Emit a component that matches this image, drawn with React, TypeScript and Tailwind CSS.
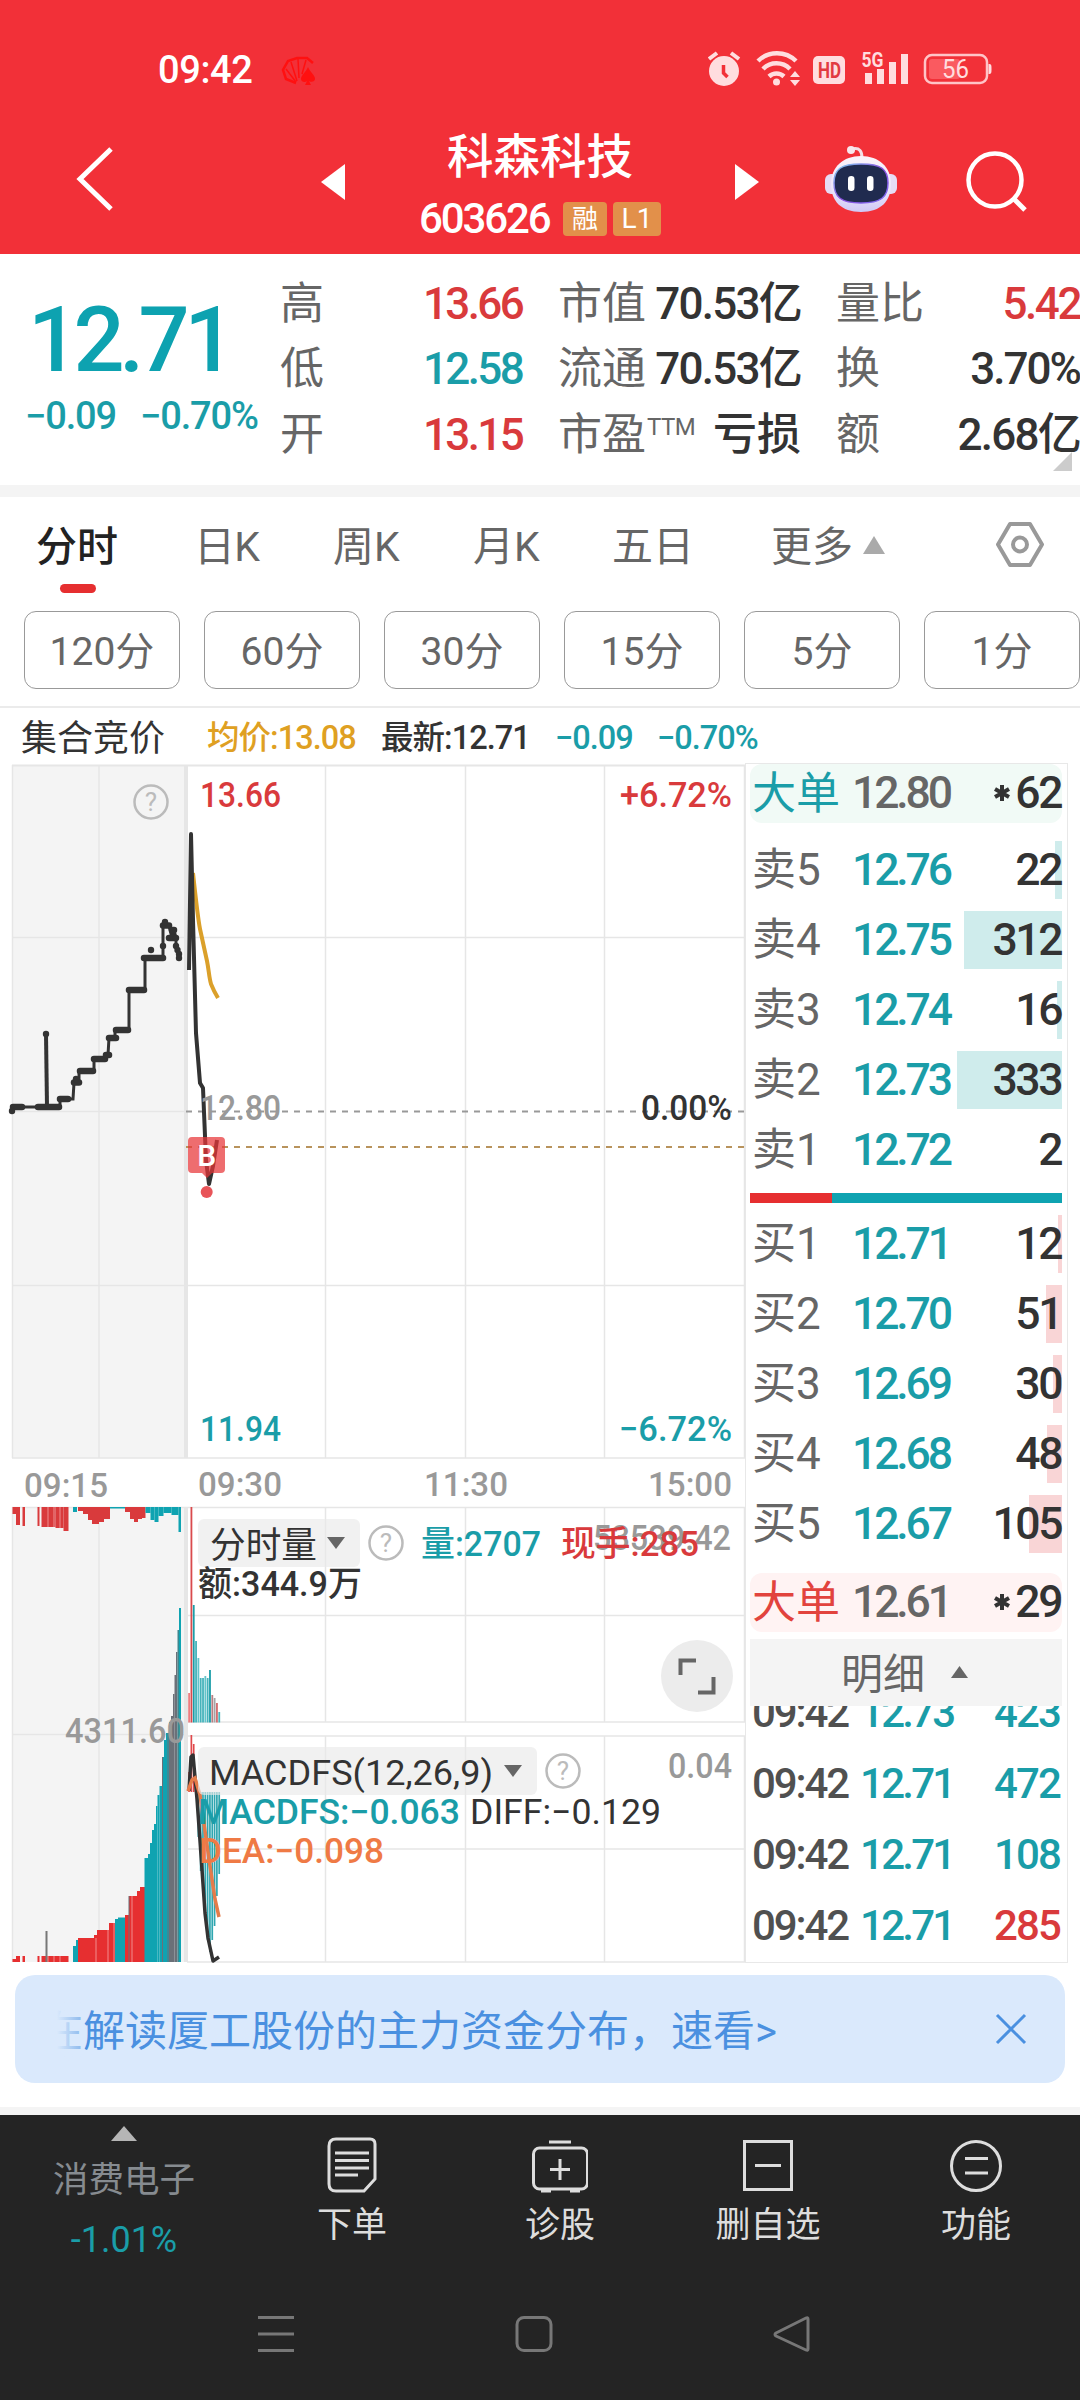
import React from 'react';
import clsx from 'clsx';

const TEAL = '#1a9da8';
const RED = '#d93a3c';
const GREY = '#999999';
const INK = '#333333';

interface Quote {
  label: string;
  sup?: string;
  value: string;
  tone: string;
}

const quoteColumns: { box: string; rows: Quote[] }[] = [
  {
    box: 'w-[242px] -ml-[1px]',
    rows: [
      { label: '高', value: '13.66', tone: 'text-[#d93a3c] tracking-[-0.06em]' },
      { label: '低', value: '12.58', tone: 'text-[#1a9da8] tracking-[-0.06em]' },
      { label: '开', value: '13.15', tone: 'text-[#d93a3c] tracking-[-0.06em]' },
    ],
  },
  {
    box: 'ml-[36px] w-[243px]',
    rows: [
      { label: '市值', value: '70.53亿', tone: 'text-[#333] tracking-[-0.04em]' },
      { label: '流通', value: '70.53亿', tone: 'text-[#333] tracking-[-0.04em]' },
      { label: '市盈', sup: 'TTM', value: '亏损', tone: 'text-[#333]' },
    ],
  },
  {
    box: 'ml-[35px] w-[244px]',
    rows: [
      { label: '量比', value: '5.42', tone: 'text-[#d93a3c] tracking-[-0.055em]' },
      { label: '换', value: '3.70%', tone: 'text-[#333] tracking-[-0.045em]' },
      { label: '额', value: '2.68亿', tone: 'text-[#333] tracking-[-0.04em]' },
    ],
  },
];

const periods = ['120分', '60分', '30分', '15分', '5分', '1分'];

const asks = [
  { label: '卖5', price: '12.76', volume: 22 },
  { label: '卖4', price: '12.75', volume: 312 },
  { label: '卖3', price: '12.74', volume: 16 },
  { label: '卖2', price: '12.73', volume: 333 },
  { label: '卖1', price: '12.72', volume: 2 },
];

const bids = [
  { label: '买1', price: '12.71', volume: 12 },
  { label: '买2', price: '12.70', volume: 51 },
  { label: '买3', price: '12.69', volume: 30 },
  { label: '买4', price: '12.68', volume: 48 },
  { label: '买5', price: '12.67', volume: 105 },
];

const ticks = [
  { time: '09:42', price: '12.73', volume: '423', tone: 'text-[#1a9da8]' },
  { time: '09:42', price: '12.71', volume: '472', tone: 'text-[#1a9da8]' },
  { time: '09:42', price: '12.71', volume: '108', tone: 'text-[#1a9da8]' },
  { time: '09:42', price: '12.71', volume: '285', tone: 'text-[#d93a3c]' },
];

const StatusBar: React.FC = () => (
  <div className="flex h-[90px] items-end justify-between pr-[86px] pl-[158px]">
    <div className="flex items-end">
      <span className="w-[95px] text-[38px] leading-[40px] font-medium tracking-[-0.01em] text-white">09:42</span>
      <svg className="mb-[5px] ml-[28px]" width="37" height="29" viewBox="0 0 37 29" fill="none" stroke="#ff1010" strokeWidth="2.500">
        <path d="M15 27 5 23 2 14 7 5 16 2 26 2 32 7" />
        <path d="M15 26 5 13M16 25 10 6M18 22 17 3M21 18 25 4" strokeWidth="1.500" />
        <path d="M27 11c-2 5-7 8-7 12 0 3 4 4 6 2l-2 4h6l-2-4c3 2 6 0 6-2 0-4-5-7-7-12z" fill="#ff1010" stroke="none" />
      </svg>
    </div>
    <svg width="286" height="54" viewBox="708 36 286 54" fill="#ffdddf">
      <circle cx="724" cy="71" r="15" />
      <path d="M709 59l8-6M739 59l-8-6" stroke="#ffdddf" strokeWidth="4" />
      <path d="M723.500 65v8l4 4" stroke="#f23038" strokeWidth="3.500" fill="none" />
      <g fill="none" stroke="#ffdddf" strokeWidth="4.500">
        <path d="M758 61a27 27 0 0 1 38 0" />
        <path d="M763 69a19 19 0 0 1 27 0" />
        <path d="M769 76.500a11 11 0 0 1 15 0" />
      </g>
      <circle cx="776.500" cy="82" r="3.500" />
      <path d="M795 71l5 6h-10zM795 86l5-6h-10z" />
      <rect x="813" y="56" width="32" height="28" rx="5" />
      <text x="818" y="78" fontSize="22" fontWeight="700" fill="#e23a40" textLength="23" lengthAdjust="spacingAndGlyphs">HD</text>
      <text x="861.500" y="67" fontSize="20" fontWeight="700" textLength="22" lengthAdjust="spacingAndGlyphs">5G</text>
      <path d="M865 73h7v11h-7zM877 69h7v15h-7zM889 62h7v22h-7zM901 54h7v30h-7z" />
      <rect x="925" y="55" width="62" height="28" rx="7" fill="none" stroke="#ffc4c7" strokeWidth="2.500" />
      <rect x="929" y="59" width="31" height="20" rx="3" fill="#fa5a60" />
      <path d="M988.500 64c3 0 3 1 3 5s0 5-3 5z" />
      <text x="942" y="78" fontSize="25" fontWeight="400" textLength="27" lengthAdjust="spacingAndGlyphs">56</text>
    </svg>
  </div>
);

const Robot: React.FC = () => (
  <svg width="74" height="68" viewBox="0 0 74 68">
    <defs>
      <linearGradient id="shell" x1="0" y1="0" x2="0" y2="1">
        <stop offset="0" stopColor="#fbf3fa" />
        <stop offset="0.6" stopColor="#ece6fa" />
        <stop offset="1" stopColor="#cfc8f6" />
      </linearGradient>
      <linearGradient id="rim" x1="0" y1="0" x2="1" y2="1">
        <stop offset="0" stopColor="#7fd3ee" />
        <stop offset="0.5" stopColor="#8b4fe0" />
        <stop offset="1" stopColor="#7a6bf0" />
      </linearGradient>
    </defs>
    <path d="M28 4c8-2 10 3 10 9" fill="none" stroke="#f4dfe6" strokeWidth="3" />
    <circle cx="27" cy="5" r="4" fill="#f8e6ec" />
    <rect x="1" y="29" width="14" height="20" rx="6" fill="#e6dcf5" />
    <rect x="59" y="29" width="14" height="20" rx="6" fill="#e6dcf5" />
    <path d="M37 11C55 11 67 22 67 39S57 67 37 67 7 56 7 39s12-28 30-28z" fill="url(#shell)" />
    <path d="M37 19c20 0 27 5 27 19s-7 20-27 20-27-6-27-20 7-19 27-19z" fill="#202b4f" stroke="url(#rim)" strokeWidth="1.500" />
    <rect x="24" y="31" width="6.500" height="15" rx="3.200" fill="#fff" />
    <rect x="43" y="31" width="6.500" height="15" rx="3.200" fill="#fff" />
  </svg>
);

const Header: React.FC = () => (
  <header className="h-[254px] bg-[#f23038] text-white">
    <StatusBar />
    <div className="flex h-[164px] pt-[40px]">
      <svg className="mt-[15px] ml-[73px]" width="42" height="68" viewBox="0 0 42 68" fill="none" stroke="#fff" strokeWidth="5">
        <path d="M38 4 7 34l31 30" />
      </svg>
      <svg className="mt-[34px] ml-[206px]" width="24" height="36" viewBox="0 0 24 36" fill="#fff">
        <path d="M24 0v36L0 18z" />
      </svg>
      <div className="w-[390px]">
        <div className="flex h-[54px] items-center justify-center text-[46.500px] leading-none font-medium">科森科技</div>
        <div className="mt-[14px] flex items-center pl-[74px]">
          <span className="w-[144px] text-[42px] leading-[42px] font-medium tracking-[-0.05em]">603626</span>
          <span className="flex h-[34px] w-[44px] items-center justify-center rounded-[4px] bg-[#e2904a] text-[26px] leading-none">融</span>
          <span className="ml-[6px] flex h-[34px] w-[48px] items-center justify-center rounded-[4px] bg-[#e2904a] text-[28px] leading-none">L1</span>
        </div>
      </div>
      <svg className="mt-[34px]" width="24" height="36" viewBox="0 0 24 36" fill="#fff">
        <path d="M0 0v36l24-18z" />
      </svg>
      <div className="mt-[15px] ml-[65px]">
        <Robot />
      </div>
      <svg className="mt-[20px] ml-[67px]" width="66" height="64" viewBox="0 0 66 64" fill="none" stroke="#fff" strokeWidth="4.500">
        <circle cx="30" cy="30" r="26.500" />
        <path d="m49 49 11 11" strokeWidth="5" />
      </svg>
    </div>
  </header>
);

const QuotePanel: React.FC = () => (
  <section className="relative flex h-[231px] bg-white pt-[17px]">
    <div className="w-[281px]">
      <div className="mt-[30px] pl-[28px] text-[90px] leading-[80px] font-medium tracking-[-0.062em] text-[#0da2b0]">12.71</div>
      <div className="mt-[15px] flex pl-[25px] text-[38px] leading-[40px] tracking-[-0.03em] text-[#1a9da8]">
        <span className="w-[115px] font-medium">−0.09</span>
        <span className="font-medium">−0.70%</span>
      </div>
    </div>
    {quoteColumns.map((column) => (
      <div key={column.rows[0].label} className={clsx('flex-none', column.box)}>
        {column.rows.map((row) => (
          <div key={row.label} className="flex h-[65.500px] items-center justify-between text-[44px] leading-none whitespace-nowrap">
            <span className="flex text-[#666]">
              {row.label}
              {row.sup && <sup className="-top-[0px] pt-[2px] pl-[1px] text-[24px] leading-none tracking-[-0.02em]">{row.sup}</sup>}
            </span>
            <span className={clsx('font-medium', row.tone)}>{row.value}</span>
          </div>
        ))}
      </div>
    ))}
    <svg className="absolute right-[8px] bottom-[14px]" width="19" height="19" viewBox="0 0 19 19" fill="#ccc">
      <path d="M19 0v19H0z" />
    </svg>
  </section>
);

const Tabs: React.FC = () => (
  <nav className="flex h-[114px] pt-[19px] text-[41px] leading-[62px] text-[#666]">
    <div className="ml-[36px] flex w-[158px] flex-col">
      <span className="h-[68px] font-medium text-[#222]">分时</span>
      <span className="ml-[24px] h-[9px] w-[36px] rounded-full bg-[#e62f30]" />
    </div>
    <span className="w-[139px] tracking-[-0.02em]">日K</span>
    <span className="w-[140px]">周K</span>
    <span className="w-[139px]">月K</span>
    <span className="w-[159px]">五日</span>
    <span className="flex w-[225px]">
      更多
      <svg className="mt-[20px] ml-[10px]" width="22" height="18" viewBox="0 0 22 18" fill="#aaa">
        <path d="M11 0 22 18H0z" />
      </svg>
    </span>
    <svg className="mt-[5px]" width="48" height="47" viewBox="0 0 48 47" fill="none" stroke="#999" strokeWidth="4">
      <path d="M14 3h20l12 20.500-12 20.500H14L2 23.500z" strokeLinejoin="round" />
      <circle cx="24" cy="23.500" r="7" />
    </svg>
  </nav>
);

const Periods: React.FC = () => (
  <div className="flex h-[97px] gap-[24px] overflow-hidden border-b-2 border-[#ebebeb] pl-[24px]">
    {periods.map((period) => (
      <div
        key={period}
        className="flex h-[78px] w-[156px] flex-none items-center justify-center rounded-[12px] border border-[#999] pt-[4px] text-[39px] leading-none text-[#666]"
      >
        {period}
      </div>
    ))}
  </div>
);

const InfoRow: React.FC = () => (
  <div className="flex h-[55px] items-center pt-[6px] text-[32.500px] leading-none tracking-[-0.03em] text-[#333]">
    <span className="ml-[21px] w-[186px] text-[36px] tracking-normal">集合竞价</span>
    <span className="w-[174px] font-medium text-[#dfa022]">均价:13.08</span>
    <span className="w-[174px] font-medium">最新:12.71</span>
    <span className="w-[102px] font-medium text-[#1a9da8]">−0.09</span>
    <span className="font-medium text-[#1a9da8]">−0.70%</span>
  </div>
);

interface LabelProps {
  x: number;
  y: number;
  w: number;
  fill?: string;
  size?: number;
  weight?: number;
  children: React.ReactNode;
}

const Label: React.FC<LabelProps> = ({ x, y, w, fill = GREY, size = 35, weight = 500, children }) => (
  <text x={x} y={y} fill={fill} fontSize={size} fontWeight={weight} textLength={w} lengthAdjust="spacingAndGlyphs">
    {children}
  </text>
);

const Help: React.FC<{ x: number; y: number }> = ({ x, y }) => (
  <g>
    <circle cx={x} cy={y} r="16.500" fill="none" stroke="#bbb" strokeWidth="2.500" />
    <text x={x} y={y + 9} fill="#bbb" fontSize="26" textAnchor="middle">?</text>
  </g>
);

// opening auction: price steps, and the dots that mark each match
const auctionLine =
  '12,1111 13,1107 60,1107 60,1099 73,1099 74,1083 79,1083 79,1071 94,1071 94,1059 104,1059 108,1055 109,1038 115,1038 115,1030 129,1030 129,990 145,990 145,958 163,958 163,925 165,922 169,926 172,938 174,930 176,938 176,946 179,958';
const auctionRuns = [
  [13, 22, 1107], [38, 59, 1107], [60, 68, 1099], [74, 79, 1082.5], [80, 93, 1071], [94, 105, 1059], [106, 109, 1055],
  [109, 116, 1038], [116, 128, 1030], [129, 144, 990], [144, 163, 958], [163, 169, 925.5], [169, 174, 938], [172, 174, 930],
];
const auctionDots = [[12, 1111], [46, 1034], [76, 1079], [151, 950], [163, 946], [165, 922], [176, 938], [176, 946], [177.5, 950], [179, 954], [179, 958]];

// [x, width, bottom] hanging from the top of the auction volume pane
const pendingBars: [number, number, number, string][] = [
  [12.5, 4, 1514, RED], [16, 4, 1525, RED], [22.5, 2.5, 1526, RED], [37.5, 2, 1526, RED], [41.5, 14, 1527, RED], [55.5, 8, 1528, RED], [63.5, 5, 1531, RED],
  [73, 4, 1512, '#0fa3b1'], [78, 5, 1511, RED], [83, 5, 1514, RED], [88, 4, 1520, RED], [92, 7, 1524, RED], [99, 5, 1522, RED], [104, 6, 1519, RED],
  [110, 15, 1508.5, '#0fa3b1'], [125, 5, 1512, RED], [130, 4, 1519, RED], [134, 4, 1522, RED], [138, 4, 1519, RED], [142, 3.5, 1518, RED],
  [145.5, 5, 1513, '#0fa3b1'], [150.5, 4, 1520, '#0fa3b1'], [154.5, 4, 1522, '#0fa3b1'], [158.5, 5, 1516, '#0fa3b1'], [163.5, 8, 1513, '#0fa3b1'], [171.5, 7, 1515, '#0fa3b1'], [178.5, 2.5, 1532, '#0fa3b1'],
];

// [x, width, top] standing on the floor of the auction volume pane
const matchedBars: [number, number, number, string][] = [
  [12.5, 4, 1959, '#e62f30'], [16, 4, 1956, '#e62f30'], [22.5, 2.5, 1956, '#e62f30'], [37.5, 2, 1956, '#e62f30'], [41.5, 27, 1956, '#e62f30'],
  [45.5, 2, 1931, '#777'], [73, 3, 1946, '#0fa3b1'], [76, 2, 1940, '#0fa3b1'], [78, 19, 1938, '#e62f30'], [94, 4, 1935, '#e62f30'], [97, 12.5, 1930, '#e62f30'],
  [109, 6, 1923, '#e62f30'], [115, 3, 1919, '#0fa3b1'], [118, 7, 1917.500, '#0fa3b1'], [125, 4, 1915, '#e62f30'], [129, 8, 1896, '#e62f30'], [137, 3, 1891, '#e62f30'],
  [140, 5, 1887, '#e62f30'], [144.500, 3.500, 1858, '#0fa3b1'], [148, 2, 1854, '#0fa3b1'], [150, 2, 1843, '#0fa3b1'], [152, 2, 1830, '#0fa3b1'], [154, 2, 1824, '#0fa3b1'],
  [156, 1.500, 1806, '#0fa3b1'], [157.500, 2, 1795, '#0fa3b1'], [159.500, 2.500, 1786, '#0fa3b1'], [162, 2, 1757, '#0fa3b1'], [164, 2, 1740, '#0fa3b1'],
  [166, 3, 1733, '#0fa3b1'], [169, 2, 1722, '#6b7078'], [171, 2, 1716, '#6b7078'], [173, 1.500, 1694, '#6b7078'], [174.500, 1.500, 1675, '#6b7078'],
  [176, 1.500, 1652, '#6b7078'], [177.500, 1.500, 1630, '#3d878f'], [179, 2, 1608, '#0fa3b1'],
];

const minuteBars: [number, string][] = [
  [1693, '#ec7d80'], [1507, '#d94a4d'], [1605, '#1a9da8'], [1641, '#45b3bb'], [1658, '#62c4ca'], [1678, '#45b3bb'], [1678, '#45b3bb'],
  [1676, '#62c4ca'], [1678, '#45b3bb'], [1670, '#1a9da8'], [1695, '#b88084'], [1698, '#a3a5a8'], [1703, '#d26a6d'], [1712, '#45b3bb'],
];
const macdBars = [1772, 1735, 1744, 1792, 1837, 1871, 1888, 1911, 1940, 1952, 1940, 1926, 1896, 1874];

const PriceChart: React.FC = () => (
  <svg className="block flex-none" width="745" height="1200" viewBox="0 763 745 1200">
    <rect x="12" y="765" width="175" height="693" fill="#f4f4f4" />
    <rect x="12" y="1507" width="175" height="455" fill="#f4f4f4" />
    <g stroke="#e6e6e6" strokeWidth="1.500" fill="none">
      <path d="M12 765.500H745" strokeWidth="2" />
      <path d="M12 937.500H745M12 1111.500H187M12 1285.500H745M12 1458H745" />
      <path d="M12 1507.500H745M187 1615.500H745M187 1722H745M187 1736H745M187 1849H745M187 1962H745M12 1734.500H187" />
      <path d="M12.500 765V1458M99 765V1458M12.500 1507V1962M99 1507V1962" />
      <path d="M186 765V1458M186 1507V1962" strokeWidth="4" />
      <path d="M325.500 765V1458M465.500 765V1458M604.500 765V1458M744.500 765V1458" />
      <path d="M325.500 1507V1722M465.500 1507V1722M604.500 1507V1722M744.500 1507V1722" />
      <path d="M325.500 1736V1962M465.500 1736V1962M604.500 1736V1962M744.500 1736V1962" />
    </g>

    {/* price pane */}
    <Help x={151} y={802} />
    <polyline points={auctionLine} fill="none" stroke={INK} strokeWidth="3" />
    <path d="M46 1034 47 1107" stroke={INK} strokeWidth="4" />
    {auctionRuns.map(([x1, x2, y], i) => (
      <path key={i} d={`M${x1} ${y}H${x2}`} stroke={INK} strokeWidth="6.500" strokeLinecap="round" />
    ))}
    {auctionDots.map(([x, y], i) => (
      <circle key={i} cx={x} cy={y} r="3.200" fill={INK} />
    ))}
    <path d="M186 1111.500H745" stroke={GREY} strokeWidth="2" strokeDasharray="6 6" />
    <path d="M186 1147H745" stroke="#b8935c" strokeWidth="2" strokeDasharray="6 6" />
    <path d="M193 873c3 28 5 46 7 56l7 32c2 10 2 16 4 23 2 5 4 9 7 14" fill="none" stroke="#dba02a" strokeWidth="4" />
    <path d="M189 970 191 834 193 920 196 1033 200 1083 203 1088 206 1160 209 1184 213 1166 217 1140" fill="none" stroke={INK} strokeWidth="4" strokeLinejoin="round" />
    <Label x={200} y={807} w={81} fill={RED}>13.66</Label>
    <Label x={620} y={807} w={112} fill={RED}>+6.72%</Label>
    <Label x={200} y={1119.500} w={81}>12.80</Label>
    <Label x={641} y={1119.500} w={91} fill={INK}>0.00%</Label>
    <Label x={200} y={1441} w={81} fill={TEAL}>11.94</Label>
    <Label x={619} y={1441} w={113} fill={TEAL}>−6.72%</Label>
    <path d="M192 1137h29q4 0 4 4v28q0 4-4 4h-9l-5 5-5-5h-10q-4 0-4-4v-28q0-4 4-4z" fill="#e83438" fillOpacity="0.72" />
    <circle cx="206.700" cy="1192" r="6" fill="#e85458" />
    <text x="206.700" y="1166" textAnchor="middle" fontSize="30" fontWeight="500" fill="#fff">B</text>

    <Label x={24} y={1496.500} w={84} size={34}>09:15</Label>
    <Label x={198} y={1496} w={84} size={34}>09:30</Label>
    <Label x={424} y={1496} w={84} size={34}>11:30</Label>
    <Label x={648} y={1496} w={84} size={34}>15:00</Label>

    {/* auction volume */}
    {pendingBars.map(([x, width, bottom, fill], i) => (
      <rect key={i} x={x} y="1507" width={width} height={bottom - 1507} fill={fill} />
    ))}
    {matchedBars.map(([x, width, top, fill], i) => (
      <rect key={i} x={x} y={top} width={width} height={1962 - top} fill={fill} />
    ))}
    <path d="M48 1507v20M54 1507v20M60 1507v21M48 1956v6M54 1956v6M60 1956v6M96 1938v24M108 1930v32M132 1896v66M114 1923v39" stroke="#f4a3a4" strokeWidth="0.800" />
    <path d="M162.500 1757v205M168 1733v229M129 1896v66" stroke="#6b7078" strokeWidth="1" />
    <Label x={65} y={1743} w={120}>4311.60</Label>

    {/* minute volume */}
    {minuteBars.map(([top, fill], i) => (
      <rect key={i} x={188.200 + i * 2.320} y={top} width="1.800" height={1722.500 - top} fill={fill} />
    ))}
    <rect x="198" y="1519" width="162" height="48" rx="6" fill="#e9e9e9" fillOpacity="0.650" />
    <Label x={210} y={1558} w={107} size={36} fill={INK} weight={400}>分时量</Label>
    <path d="M327 1537h18l-9 12z" fill="#666" />
    <Help x={386} y={1543} />
    <Label x={593} y={1550} w={138}>53539.42</Label>
    <Label x={421} y={1556} w={120} fill={TEAL}>量:2707</Label>
    <Label x={561} y={1556} w={138} fill={RED}>现手:285</Label>
    <Label x={198} y={1596} w={164} fill={INK}>额:344.9万</Label>
    <circle cx="697" cy="1676" r="36" fill="#ececec" />
    <path d="M680.500 1675v-14.500H696M698 1692.500h15.500V1677" fill="none" stroke="#666" strokeWidth="4" />

    {/* macd */}
    {macdBars.map((end, i) => (
      <rect
        key={i}
        x={188.200 + i * 2.320}
        y={Math.min(end, 1792)}
        width="1.700"
        height={Math.abs(end - 1792)}
        fill={end < 1792 ? '#e0484b' : '#2fa6b0'}
      />
    ))}
    <path d="M189 1791 191 1757 193 1755 197 1799 200 1841 205 1913 208 1938 213 1961 219 1957" fill="none" stroke={INK} strokeWidth="3.500" strokeLinejoin="round" />
    <path d="M188 1791 192 1780 195 1778 200 1795 205 1831 210 1866 215 1899 219 1917" fill="none" stroke="#e57b4a" strokeWidth="3.500" />
    <rect x="198" y="1747" width="339" height="48" rx="6" fill="#e9e9e9" fillOpacity="0.650" />
    <Label x={209} y={1785} w={284} fill={INK} weight={400}>MACDFS(12,26,9)</Label>
    <path d="M504 1765h18l-9 12z" fill="#666" />
    <Help x={563} y={1771} />
    <Label x={668} y={1778} w={64}>0.04</Label>
    <Label x={198} y={1824} w={262} fill={TEAL}>MACDFS:−0.063</Label>
    <Label x={470} y={1824} w={191} fill={INK} weight={400}>DIFF:−0.129</Label>
    <Label x={199} y={1863} w={185} fill="#ef7a45">DEA:−0.098</Label>
  </svg>
);

interface LevelProps {
  label: string;
  price: string;
  volume: number;
  bar: string;
}

const Level: React.FC<LevelProps> = ({ label, price, volume, bar }) => (
  <div className="relative flex h-[70px] items-center pt-[2px] text-[44.500px] leading-none">
    <span className={clsx('absolute top-[7px] right-0 h-[58px]', bar)} style={{ width: volume > 10 ? Math.round(volume * 0.315) : 0 }} />
    <span className="relative w-[102px] pl-[2px] text-[44px] text-[#666]">{label}</span>
    <span className="relative font-medium tracking-[-0.07em] text-[#1a9da8]">{price}</span>
    <span className="relative mr-[1px] ml-auto font-medium tracking-[-0.055em] text-[#333]">{volume}</span>
  </div>
);

const BigOrder: React.FC<{ price: string; volume: string; tone: string }> = ({ price, volume, tone }) => (
  <div className={clsx('flex h-[59px] flex-none items-center rounded-[12px] text-[44.500px] leading-none', tone)}>
    <span className="w-[102px] pl-[2px] text-[44px]">大单</span>
    <span className="font-medium tracking-[-0.07em] text-[#666]">{price}</span>
    <span className="mr-[1px] ml-auto flex font-medium tracking-[-0.055em] text-[#333]">
      <svg className="mt-[13px] mr-[5px]" width="16" height="18" viewBox="0 0 16 18" stroke="#333" strokeWidth="4">
        <path d="M8 1v16M1 5l14 8M15 5 1 13" />
      </svg>
      {volume}
    </span>
  </div>
);

const OrderBook: React.FC = () => (
  <aside className="flex h-[1200px] w-[323px] flex-none flex-col border border-[#e8e8e8] bg-white pr-[5px] pl-[4px]">
    <BigOrder price="12.80" volume="62" tone="bg-[#f1faf6] text-[#1a9da8]" />
    <div className="mt-[11px]">
      {asks.map((level) => (
        <Level key={level.label} {...level} bar="bg-[#cfecec]" />
      ))}
    </div>
    <div className="mt-[9px] flex h-[10px]">
      <span className="w-[82px] bg-[#e62f30]" />
      <span className="flex-1 bg-[#0fa3b1]" />
    </div>
    <div className="mt-[5px]">
      {bids.map((level) => (
        <Level key={level.label} {...level} bar="bg-[#f9d5d6]" />
      ))}
    </div>
    <div className="mt-[15px]">
      <BigOrder price="12.61" volume="29" tone="bg-[#fff3f3] text-[#e2433d]" />
    </div>
    <div className="mt-[7px] flex h-[67px] flex-none items-center justify-center bg-[#f4f4f4] pt-[4px] pr-[3px] text-[42px] leading-none text-[#666]">
      明细
      <svg className="-mt-[6px] ml-[26px]" width="17" height="12" viewBox="0 0 17 12" fill="#666">
        <path d="M8.500 0 17 12H0z" />
      </svg>
    </div>
    <div className="min-h-0 flex-1 overflow-hidden">
      <div className="-mt-[29px]">
        {ticks.map((tick, i) => (
          <div key={i} className="flex h-[71px] items-center pr-[2px] pl-[2px] text-[42px] leading-none font-medium tracking-[-0.045em]">
            <span className="w-[108px] tracking-[-0.05em] text-[#505050]">{tick.time}</span>
            <span className="tracking-[-0.065em] text-[#1a9da8]">{tick.price}</span>
            <span className={clsx('ml-auto', tick.tone)}>{tick.volume}</span>
          </div>
        ))}
      </div>
    </div>
  </aside>
);

const Banner: React.FC = () => (
  <div className="mx-[15px] mt-[12px] flex h-[108px] items-center justify-between rounded-[20px] bg-[#dae9fc] pr-[38px] pl-[42px]">
    <div className="relative mt-[5px] flex w-[800px] overflow-hidden text-[42px] leading-[60px] whitespace-nowrap text-[#4a90e0]">
      <span className="-ml-[16px]">在解读厦工股份的主力资金分布，速看&gt;</span>
      <span className="absolute top-0 left-0 h-full w-[28px] bg-linear-to-r from-[#dae9fc] to-[#dae9fc]/40" />
    </div>
    <svg width="32" height="32" viewBox="0 0 32 32" stroke="#4a90e0" strokeWidth="3">
      <path d="m2 2 28 28M30 2 2 30" />
    </svg>
  </div>
);

const actions: { label: string; icon: React.ReactNode }[] = [
  {
    label: '下单',
    icon: (
      <>
        <path d="M12 3h34q5 0 5 5v35L40 55H12q-7 0-7-7V10q0-7 7-7z" />
        <path d="M11 17h34M11 24.500h34M11 32h34M11 39h23" />
      </>
    ),
  },
  {
    label: '诊股',
    icon: (
      <>
        <rect x="1.500" y="12" width="54" height="41" rx="6" />
        <path d="M17 6h22M28 23v21M18 33.500h20" />
        <path d="M9 55h10M38 55h10" />
      </>
    ),
  },
  {
    label: '删自选',
    icon: (
      <>
        <rect x="4.500" y="5.500" width="47" height="48" />
        <path d="M15 29.500h26" />
      </>
    ),
  },
  {
    label: '功能',
    icon: (
      <>
        <circle cx="28" cy="30" r="24.500" />
        <path d="M17 22.500h23M17 37h23" />
      </>
    ),
  },
];

const BottomBar: React.FC = () => (
  <footer className="h-[285px] bg-[#242424]">
    <div className="flex h-[165px]">
      <div className="flex w-[248px] flex-col items-center pt-[11px] leading-none">
        <svg width="26" height="15" viewBox="0 0 26 15" fill="#b5b5b5">
          <path d="M13 0 26 15H0z" />
        </svg>
        <span className="mt-[19px] text-[35.500px] leading-[40px] text-[#868b90]">消费电子</span>
        <span className="mt-[20px] text-[36px] leading-[40px] text-[#1a9da8]">-1.01%</span>
      </div>
      {actions.map((action) => (
        <div key={action.label} className="flex w-[208px] flex-col items-center pt-[21px] text-[#ddd]">
          <svg width="56" height="58" viewBox="0 0 56 58" fill="none" stroke="#ddd" strokeWidth="3">
            {action.icon}
          </svg>
          <span className="mt-[12px] text-[35px] leading-[40px]">{action.label}</span>
        </div>
      ))}
    </div>
    <div className="flex pt-[34px]">
      <svg className="ml-[256px]" width="40" height="40" viewBox="0 0 40 40" stroke="#777" strokeWidth="3">
        <path d="M2 3.500h36M2 20h36M2 36.500h36" />
      </svg>
      <svg className="ml-[218px]" width="40" height="40" viewBox="0 0 40 40" fill="none" stroke="#777" strokeWidth="3">
        <rect x="3" y="3.500" width="34" height="33" rx="7" />
      </svg>
      <svg className="ml-[218px]" width="40" height="40" viewBox="0 0 40 40" fill="none" stroke="#777" strokeWidth="3" strokeLinejoin="round">
        <path d="M36 5v30q0 2-2 1L4 22q-2-1.500 0-3L34 4q2-1 2 1z" />
      </svg>
    </div>
  </footer>
);

const App: React.FC = () => (
  <div className="h-[2400px] w-[1080px] overflow-hidden bg-white font-[Roboto,'Noto_Sans_CJK_SC',sans-serif]">
    <Header />
    <QuotePanel />
    <div className="h-[12px] bg-[#f4f4f4]" />
    <Tabs />
    <Periods />
    <InfoRow />
    <div className="flex">
      <PriceChart />
      <OrderBook />
    </div>
    <Banner />
    <div className="mt-[24px] h-[8px] bg-[#f4f4f4]" />
    <BottomBar />
  </div>
);

export default App;
